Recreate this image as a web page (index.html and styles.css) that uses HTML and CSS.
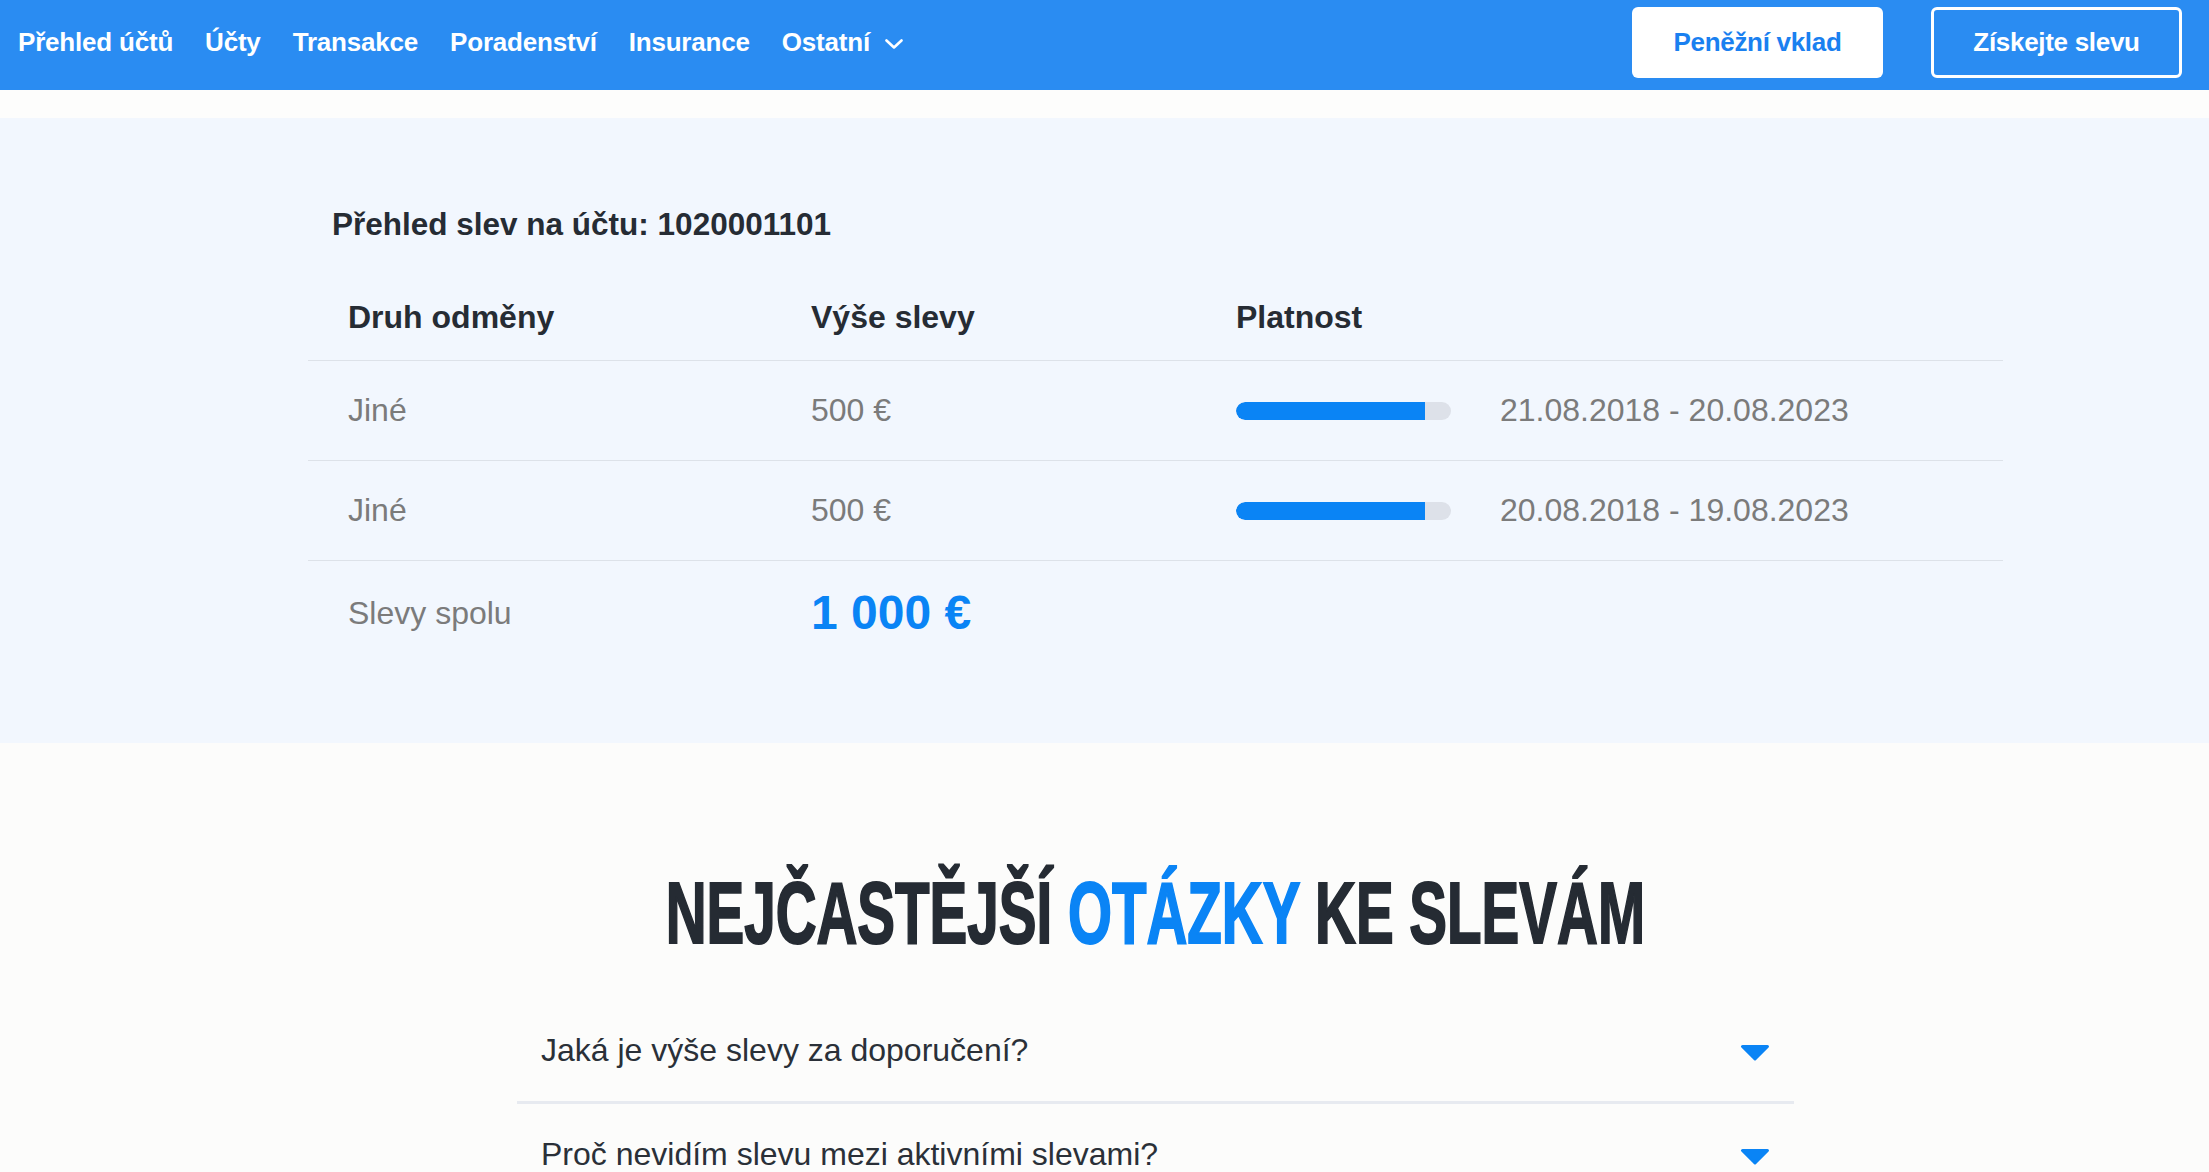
FILE: index.html
```html
<!DOCTYPE html>
<html lang="cs">
<head>
<meta charset="utf-8">
<title>Přehled slev</title>
<link rel="stylesheet" href="styles.css">
</head>
<body>
<nav class="topbar">
  <ul class="menu">
    <li>Přehled účtů</li>
    <li>Účty</li>
    <li>Transakce</li>
    <li>Poradenství</li>
    <li>Insurance</li>
    <li class="has-sub">Ostatní
      <svg class="chevron" width="18" height="10" viewBox="0 0 18 10"><path d="M1.5 1.5 L9 8.5 L16.5 1.5" fill="none" stroke="#fff" stroke-width="2.6" stroke-linecap="round" stroke-linejoin="round"/></svg>
    </li>
  </ul>
  <div class="actions">
    <a class="btn btn-white">Peněžní vklad</a>
    <a class="btn btn-outline">Získejte slevu</a>
  </div>
</nav>
<div class="spacer"></div>
<section class="discounts">
  <div class="container">
    <h1 class="title">Přehled slev na účtu: 1020001101</h1>
    <div class="table">
      <div class="row head">
        <div class="cell">Druh odměny</div>
        <div class="cell">Výše slevy</div>
        <div class="cell">Platnost</div>
      </div>
      <div class="row">
        <div class="cell">Jiné</div>
        <div class="cell">500 €</div>
        <div class="cell validity">
          <div class="bar"><div class="bar-fill" style="width: 88%"></div></div>
          <span>21.08.2018 - 20.08.2023</span>
        </div>
      </div>
      <div class="row">
        <div class="cell">Jiné</div>
        <div class="cell">500 €</div>
        <div class="cell validity">
          <div class="bar"><div class="bar-fill" style="width: 88%"></div></div>
          <span>20.08.2018 - 19.08.2023</span>
        </div>
      </div>
      <div class="row total">
        <div class="cell">Slevy spolu</div>
        <div class="cell total-value">1 000 €</div>
        <div class="cell"></div>
      </div>
    </div>
  </div>
</section>
<section class="faq">
  <h2 class="faq-title"><span class="faq-title-inner">NEJČASTĚJŠÍ <em>OTÁZKY</em> KE SLEVÁM</span></h2>
  <div class="faq-list">
    <div class="faq-item">
      <span>Jaká je výše slevy za doporučení?</span>
      <svg class="tri" width="30" height="17" viewBox="0 0 30 17"><path d="M2.5 2.5 L27.5 2.5 L15 15 Z" fill="#0a84f5" stroke="#0a84f5" stroke-width="3" stroke-linejoin="round"/></svg>
    </div>
    <div class="faq-item">
      <span>Proč nevidím slevu mezi aktivními slevami?</span>
      <svg class="tri" width="30" height="17" viewBox="0 0 30 17"><path d="M2.5 2.5 L27.5 2.5 L15 15 Z" fill="#0a84f5" stroke="#0a84f5" stroke-width="3" stroke-linejoin="round"/></svg>
    </div>
  </div>
</section>
</body>
</html>
```
FILE: styles.css
```css
html, body {
  margin: 0;
  padding: 0;
}
body {
  background: #fcfcfb;
  font-family: "Liberation Sans", Arial, sans-serif;
  color: #262c34;
  overflow-x: hidden;
}
.topbar {
  display: flex;
  justify-content: space-between;
  align-items: flex-start;
  height: 90px;
  box-sizing: border-box;
  padding: 7px 27px 0 18px;
  background: #2a8cf2;
}
.menu {
  display: flex;
  gap: 32px;
  list-style: none;
  margin: 0;
  padding: 0;
  height: 70px;
  align-items: center;
}
.menu li {
  display: flex;
  align-items: center;
  font-weight: 700;
  font-size: 26px;
  line-height: 70px;
  letter-spacing: -0.2px;
  color: #fff;
}
.chevron {
  margin-left: 15px;
  margin-top: 3px;
}
.actions {
  display: flex;
  gap: 48px;
}
.btn {
  display: flex;
  align-items: center;
  justify-content: center;
  width: 251px;
  height: 71px;
  box-sizing: border-box;
  border-radius: 6px;
  font-weight: 700;
  font-size: 26px;
  letter-spacing: -0.3px;
}
.btn-white {
  background: #fff;
  color: #1a80f0;
}
.btn-outline {
  border: 3px solid #fff;
  color: #fff;
}
.spacer {
  height: 28px;
  background: #fdfdfc;
}
.discounts {
  background: #f2f7fe;
  padding: 88px 0 78px 102px;
}
.container {
  width: 1695px;
  margin: 0 auto;
}
.title {
  margin: 0 0 32px;
  padding-left: 24px;
  font-size: 31.5px;
  line-height: 37px;
  font-weight: 700;
  color: #262c34;
}
.row {
  display: grid;
  grid-template-columns: 463px 425px 1fr;
  border-bottom: 1px solid #dde2e9;
  align-items: center;
}
.cell {
  padding: 31px 0 31px 40px;
  font-size: 32px;
  line-height: 37px;
  color: #7b7b7b;
}
.head .cell {
  padding-top: 24px;
  padding-bottom: 24px;
  font-weight: 700;
  color: #262c34;
}
.validity {
  display: flex;
  align-items: center;
  gap: 49px;
}
.bar {
  width: 215px;
  height: 18px;
  border-radius: 9px;
  background: #dde1e9;
  overflow: hidden;
}
.bar-fill {
  height: 100%;
  background: #0a84f5;
  border-radius: 9px 0 0 9px;
}
.total {
  border-bottom: none;
}
.total .cell {
  padding-top: 24px;
  padding-bottom: 24px;
}
.total-value {
  font-size: 48px;
  line-height: 56px;
  font-weight: 700;
  color: #0a84f5;
}
.faq {
  padding: 118px 0 40px 102px;
}
.faq-title {
  margin: 0;
  text-align: center;
  font-size: 87px;
  line-height: 104px;
  font-weight: 700;
  color: #252b33;
  white-space: nowrap;
}
.faq-title-inner {
  display: inline-block;
  transform: scaleX(0.65);
  -webkit-text-stroke: 2px #252b33;
}
.faq-title-inner em {
  font-style: normal;
  color: #0a84f5;
  -webkit-text-stroke: 2px #0a84f5;
}
.faq-list {
  width: 1277px;
  margin: 35px auto 0;
}
.faq-item {
  display: flex;
  justify-content: space-between;
  align-items: center;
  padding: 32px 24px;
  font-size: 32px;
  line-height: 37px;
  color: #2a3038;
  border-bottom: 3px solid #e7eaf0;
}
.tri {
  margin-top: 4px;
}
```
